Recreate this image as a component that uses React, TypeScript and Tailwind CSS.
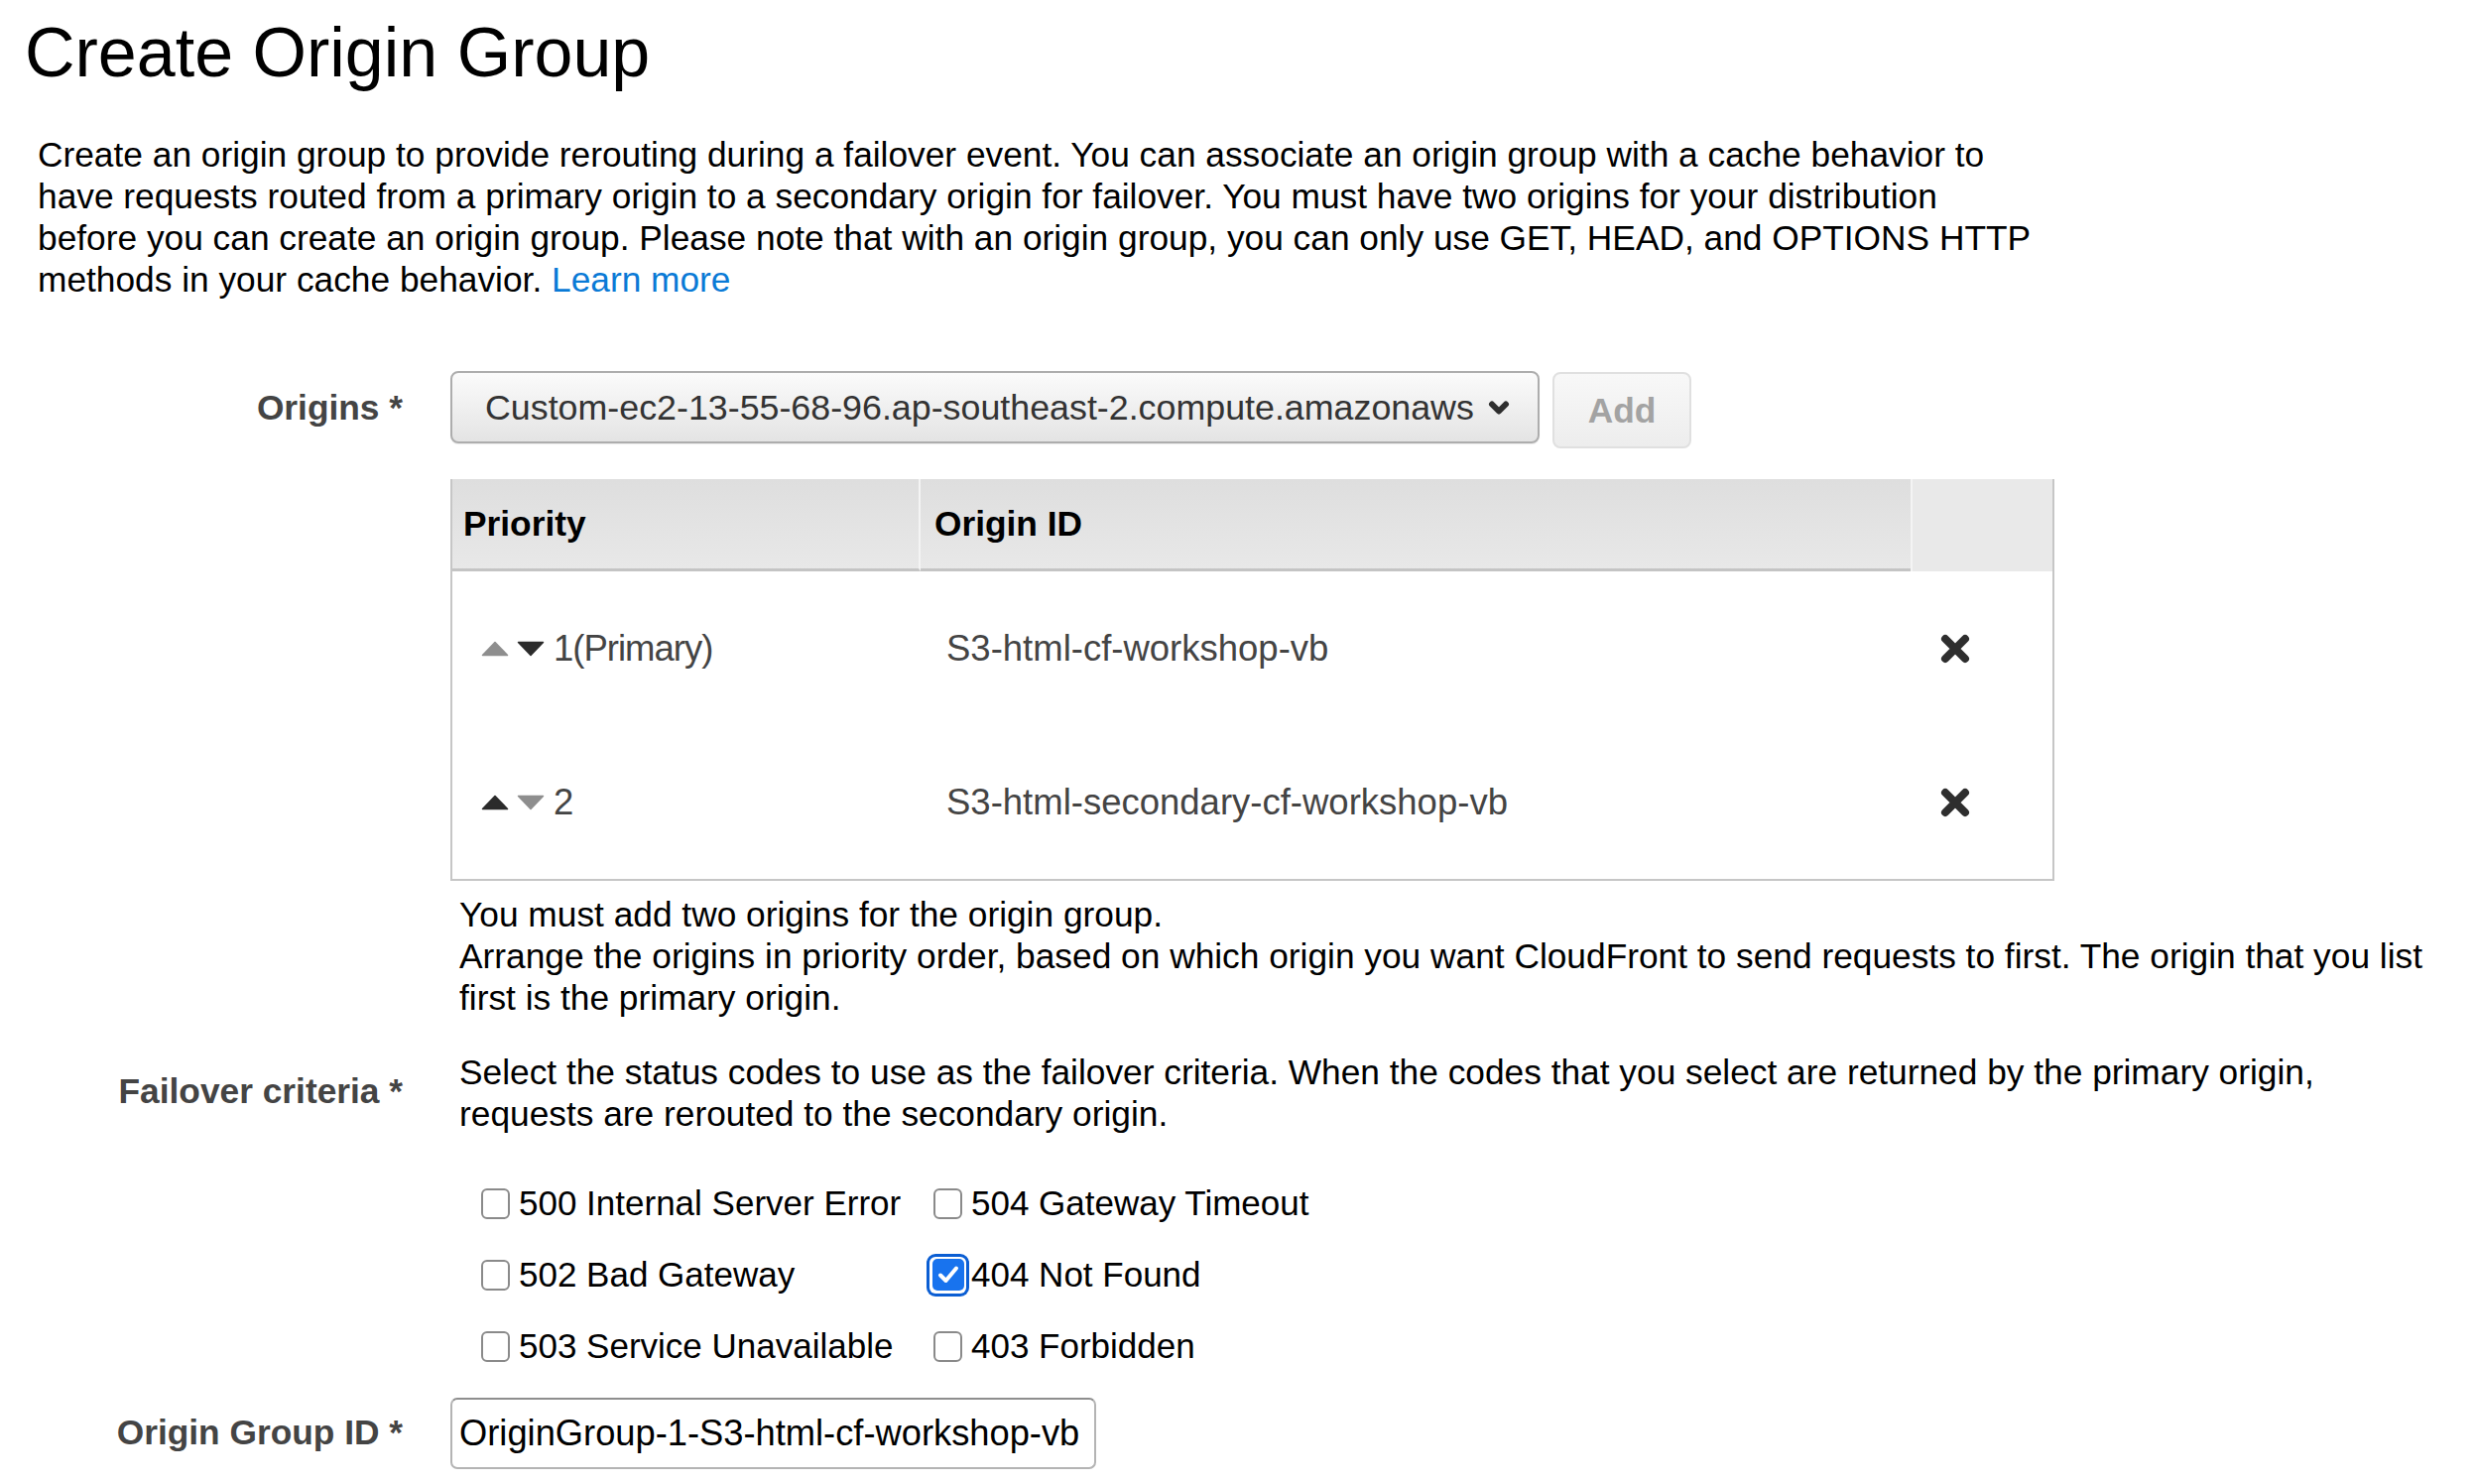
import React from 'react';

// Create Origin Group form (CloudFront console)

const font = "font-['Liberation_Sans',Arial,Helvetica,sans-serif]";

function Triangle({ dir, active }: { dir: 'up' | 'down'; active: boolean }) {
    const fill = active ? '#2b2b2b' : '#8e8e8e';
    return (
        <svg width="28" height="16" viewBox="0 0 28 16" className="shrink-0">
            {dir === 'up' ? (
                <path d="M14 1.5 L26.5 14.5 L1.5 14.5 Z" fill={fill} stroke={fill} strokeWidth="1.5" strokeLinejoin="round" />
            ) : (
                <path d="M1.5 1.5 L26.5 1.5 L14 14.5 Z" fill={fill} stroke={fill} strokeWidth="1.5" strokeLinejoin="round" />
            )}
        </svg>
    );
}

function RemoveIcon() {
    return (
        <svg width="32" height="32" viewBox="0 0 32 32">
            <path d="M6 6 L26 26 M26 6 L6 26" stroke="#2e2e2e" strokeWidth="8" strokeLinecap="round" />
        </svg>
    );
}

function Checkbox({ checked }: { checked?: boolean }) {
    if (checked) {
        return (
            <span className="flex h-[43px] w-[43px] shrink-0 items-center justify-center rounded-[9px] bg-[#0b5ed3]">
                <span className="flex h-[37px] w-[37px] items-center justify-center rounded-[6px] bg-white">
                    <span className="flex h-[32px] w-[32px] items-center justify-center rounded-[5px] bg-[#1873ee]">
                        <svg width="22" height="20" viewBox="0 0 22 20">
                            <path d="M3 10.5 L8.5 16 L19 3.5" stroke="#fff" strokeWidth="4" fill="none" strokeLinecap="round" strokeLinejoin="round" />
                        </svg>
                    </span>
                </span>
            </span>
        );
    }
    return (
        <span className="mx-[7px] h-[31px] w-[29px] shrink-0 rounded-[6px] border-2 border-[#8a8a8a] bg-white" />
    );
}

function CheckItem({ label, checked }: { label: string; checked?: boolean }) {
    return (
        <div className="flex h-[72px] items-center">
            <div className="flex w-[46px] justify-start">
                <Checkbox checked={checked} />
            </div>
            <span className="ml-[-1px]">{label}</span>
        </div>
    );
}

export default function App() {
    const rows = [
        { up: false, down: true, label: '1(Primary)', id: 'S3-html-cf-workshop-vb' },
        { up: true, down: false, label: '2', id: 'S3-html-secondary-cf-workshop-vb' },
    ];

    return (
        <div className={`${font} min-h-screen w-full bg-white text-[35.3px] leading-[42px] text-black`}>
            <h1 className="ml-[25px] pt-[13px] text-[70px] leading-[80px] font-normal">Create Origin Group</h1>

            <p className="ml-[38px] mt-[42px] whitespace-nowrap">
                Create an origin group to provide rerouting during a failover event. You can associate an origin group with a cache behavior to
                <br />
                have requests routed from a primary origin to a secondary origin for failover. You must have two origins for your distribution
                <br />
                before you can create an origin group. Please note that with an origin group, you can only use GET, HEAD, and OPTIONS HTTP
                <br />
                methods in your cache behavior. <span className="text-[#0a7ad6]">Learn more</span>
            </p>

            {/* Origins */}
            <div className="mt-[71px] grid grid-cols-[406px_1fr] gap-x-[48px]">
                <div className="flex h-[73px] items-center justify-end font-bold text-[#444]">Origins *</div>
                <div className="flex items-start gap-[13px]">
                    <div className="flex h-[73px] w-[1098px] items-center justify-between rounded-[8px] border-2 border-[#adadad] bg-gradient-to-b from-[#fbfbfb] to-[#e4e4e4] pl-[33px] pr-[28px] text-[35.8px] text-[#333] shadow-[0_1px_1px_rgba(0,0,0,0.08)]">
                        <span className="whitespace-nowrap">Custom-ec2-13-55-68-96.ap-southeast-2.compute.amazonaws</span>
                        <svg width="22" height="18" viewBox="0 0 22 18">
                            <path d="M4 5.5 L11 12.5 L18 5.5" stroke="#2e2e2e" strokeWidth="6" fill="none" strokeLinecap="round" strokeLinejoin="round" />
                        </svg>
                    </div>
                    <div className="mt-[1px] flex h-[77px] w-[140px] items-center justify-center rounded-[8px] border-2 border-[#e0e0e0] bg-gradient-to-b from-[#f8f8f8] to-[#ededed] font-bold text-[#a3a3a3]">
                        Add
                    </div>
                </div>

                {/* Table */}
                <div />
                <div className="mt-[31px] w-[1617px] border-x-2 border-b-2 border-[#c6c6c6] text-[#444]">
                    <div className="flex h-[93px]">
                        <div className="flex w-[472px] items-center border-r-2 border-b-[3px] border-r-[#f4f4f4] border-b-[#c4c4c4] bg-gradient-to-b from-[#dedede] to-[#e8e8e8] pl-[11px] font-bold text-black">
                            Priority
                        </div>
                        <div className="flex w-[998px] items-center border-b-[3px] border-b-[#c4c4c4] bg-gradient-to-b from-[#dedede] to-[#e8e8e8] pl-[14px] font-bold text-black">
                            Origin ID
                        </div>
                        <div className="flex-1 border-l-2 border-l-[#f4f4f4] bg-[#e9e9e9]" />
                    </div>
                    {rows.map((r) => (
                        <div key={r.label} className="flex h-[155px] items-center text-[36.5px]">
                            <div className="flex w-[472px] items-center pl-[29px]">
                                <Triangle dir="up" active={r.up} />
                                <span className="ml-[8px]" />
                                <Triangle dir="down" active={r.down} />
                                <span className="ml-[9px] tracking-[-1px]">{r.label}</span>
                            </div>
                            <div className="w-[1000px] pl-[26px]">{r.id}</div>
                            <div className="flex flex-1 items-center pl-[27px]">
                                <RemoveIcon />
                            </div>
                        </div>
                    ))}
                </div>

                <div />
                <div className="mt-[13px] ml-[9px] whitespace-nowrap">
                    You must add two origins for the origin group.
                    <br />
                    Arrange the origins in priority order, based on which origin you want CloudFront to send requests to first. The origin that you list
                    <br />
                    first is the primary origin.
                </div>
            </div>

            {/* Failover criteria */}
            <div className="mt-[33px] grid grid-cols-[406px_1fr] gap-x-[48px]">
                <div className="flex items-center justify-end font-bold text-[#444]">
                    <span className="-mt-[4px]">Failover criteria *</span>
                </div>
                <div className="ml-[9px] whitespace-nowrap">
                    Select the status codes to use as the failover criteria. When the codes that you select are returned by the primary origin,
                    <br />
                    requests are rerouted to the secondary origin.
                </div>

                <div />
                <div className="mt-[33px] grid w-[920px] grid-cols-[456px_1fr] pl-[24px] text-[35px]">
                    <CheckItem label="500 Internal Server Error" />
                    <CheckItem label="504 Gateway Timeout" />
                    <CheckItem label="502 Bad Gateway" />
                    <CheckItem label="404 Not Found" checked />
                    <CheckItem label="503 Service Unavailable" />
                    <CheckItem label="403 Forbidden" />
                </div>
            </div>

            {/* Origin Group ID */}
            <div className="mt-[16px] grid grid-cols-[406px_1fr] gap-x-[48px] pb-[20px]">
                <div className="flex h-[72px] items-center justify-end font-bold text-[#444]">
                    <span className="-mt-[3px]">Origin Group ID *</span>
                </div>
                <div className="flex h-[72px] w-[651px] items-center rounded-[7px] border-2 border-[#b4b4b4] border-t-[#8e8e8e] bg-white pl-[7px] text-[36.3px]">
                    OriginGroup-1-S3-html-cf-workshop-vb
                </div>
            </div>
        </div>
    );
}
